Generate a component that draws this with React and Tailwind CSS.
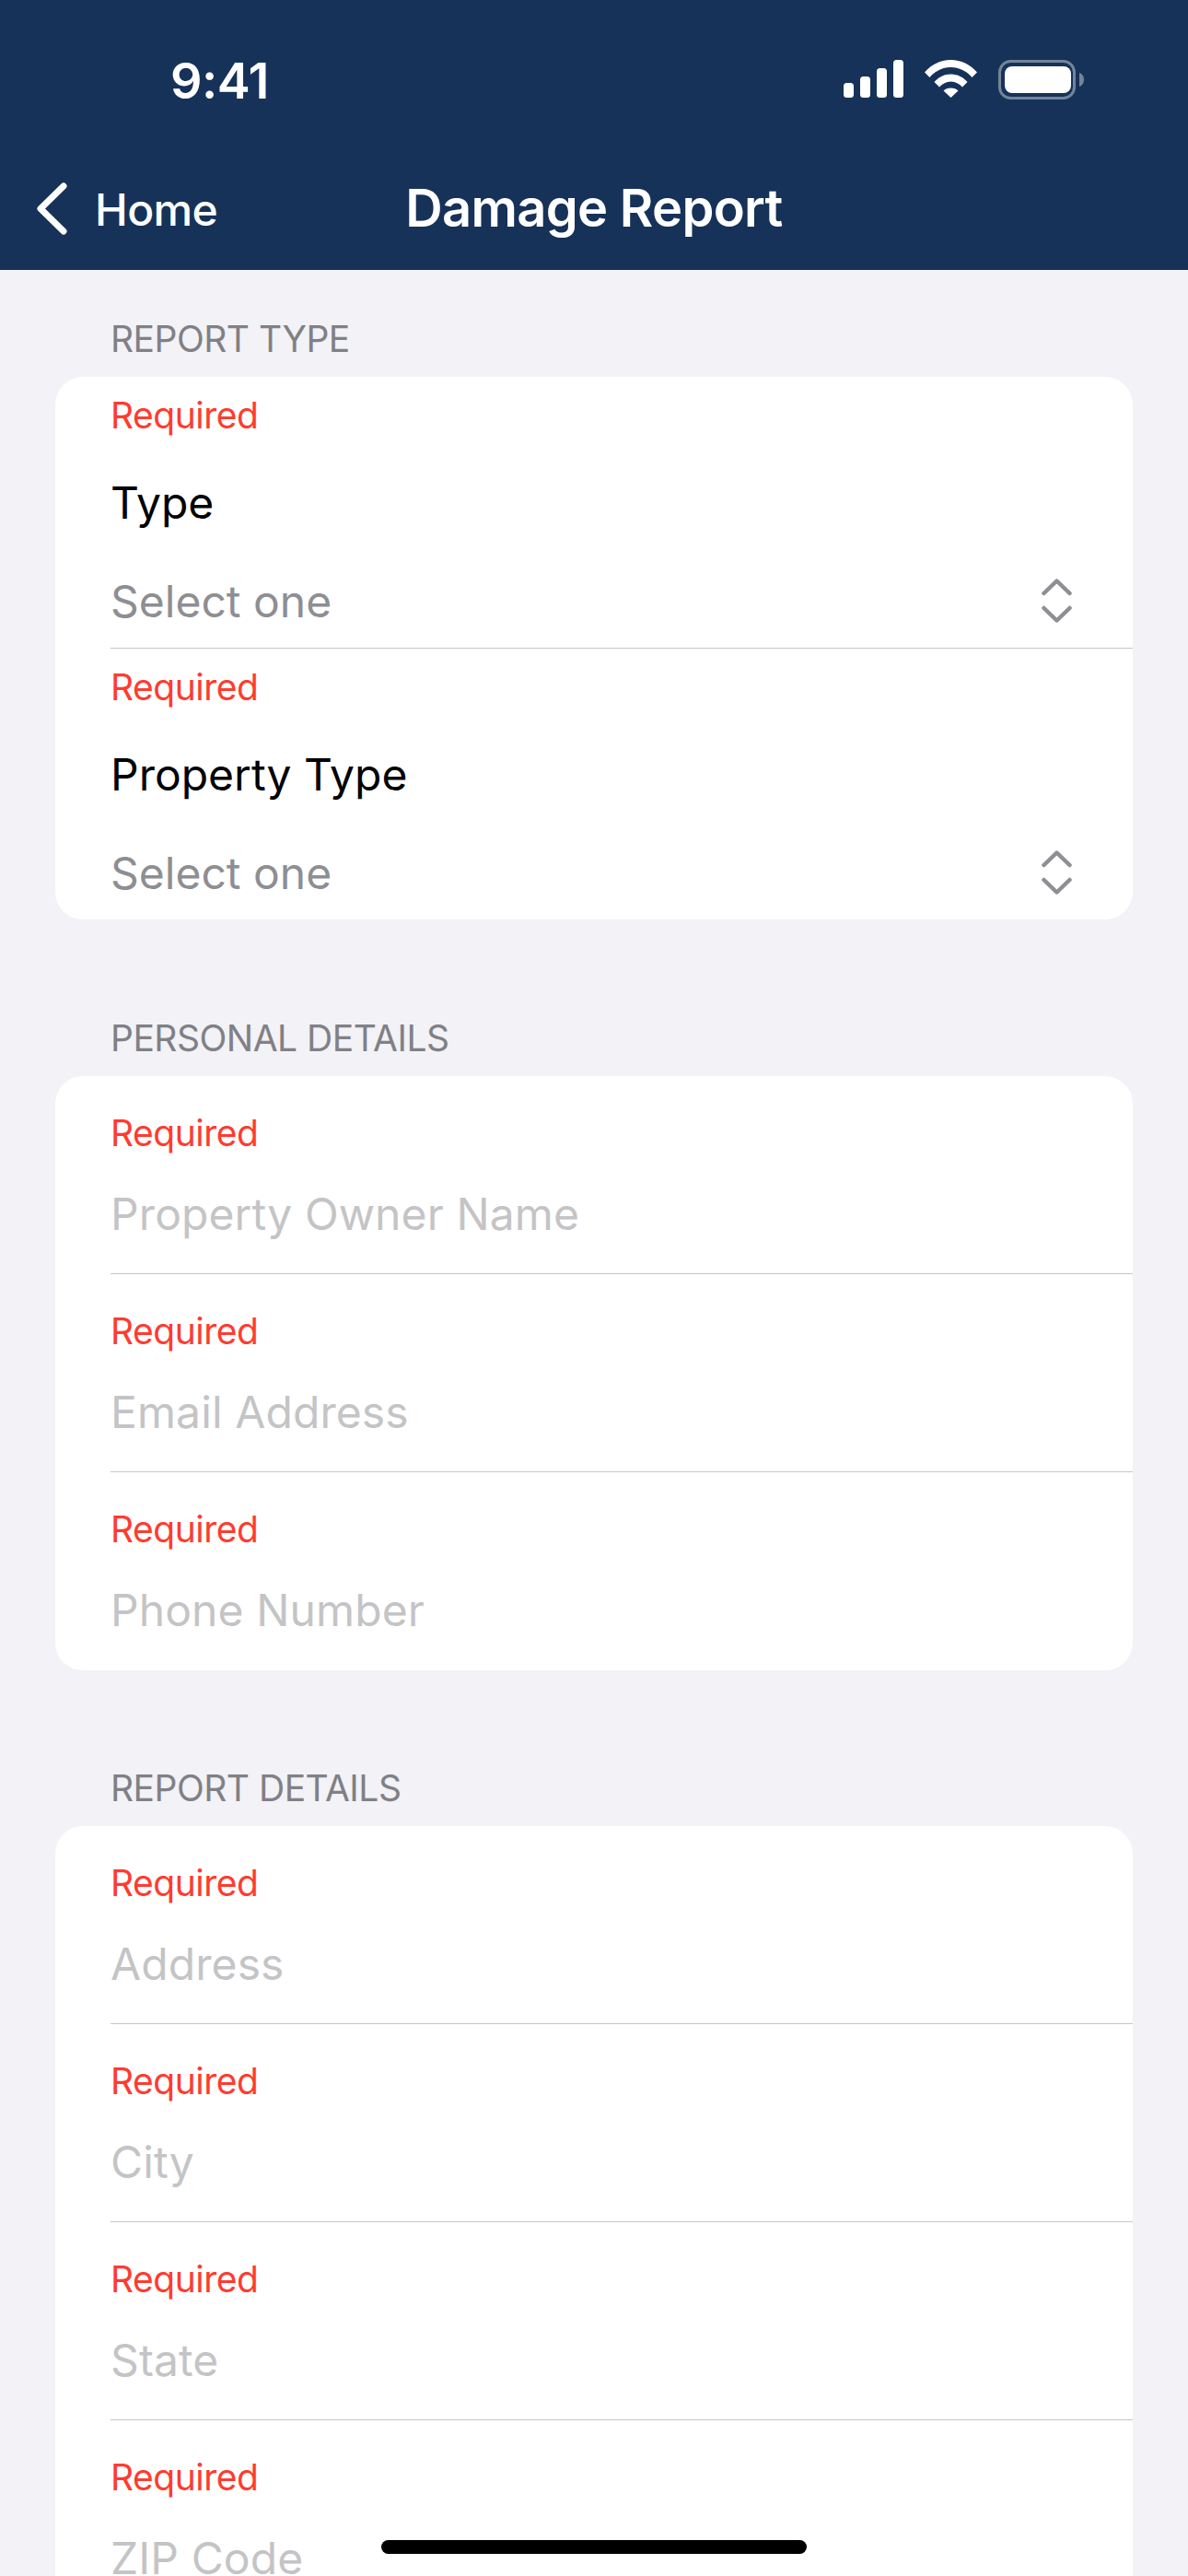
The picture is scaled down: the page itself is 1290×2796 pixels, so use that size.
import React from 'react';

const FONT = "font-['Inter','Liberation_Sans',sans-serif]";

const SignalIcon = () => (
  <svg width="65" height="41" viewBox="0 0 65 41" fill="white">
    <rect x="0" y="25" width="11" height="16" rx="3.5" />
    <rect x="18" y="18" width="11" height="23" rx="3.5" />
    <rect x="36" y="9" width="11" height="32" rx="3.5" />
    <rect x="54" y="0" width="11" height="41" rx="3.5" />
  </svg>
);

const WifiIcon = () => (
  <svg width="57" height="41" viewBox="0 0 57 41" fill="white">
    <path d="M0 13.5C7.5 5 17.5 0 28.5 0S49.5 5 57 13.5L51.5 19C45.5 12 37.5 8 28.5 8S11.5 12 5.500 19Z" />
    <path d="M10.500 24C15 19 21 15.500 28.500 15.500S42 19 46.500 24L41 29.500C37.500 26 33.500 23.500 28.500 23.500S19.500 26 16 29.500Z" />
    <path d="M20.500 33.500C22.500 31.500 25 30.500 28.500 30.500S34.500 31.500 36.500 33.500L28.500 41Z" />
  </svg>
);

const BatteryIcon = () => (
  <svg width="93" height="43" viewBox="0 0 93 43" fill="none">
    <rect x="1.500" y="1.500" width="81" height="40" rx="12" stroke="white" strokeOpacity="0.4" strokeWidth="3" />
    <rect x="7" y="7" width="72" height="29" rx="8" fill="white" />
    <path d="M88 14C91 15 93 18 93 21.500S91 28 88 29Z" fill="white" fillOpacity="0.4" />
  </svg>
);

const BackChevron = () => (
  <svg width="33" height="57" viewBox="0 0 33 57" fill="none" stroke="white" strokeWidth="7" strokeLinecap="round" strokeLinejoin="round" className="mt-[2px]">
    <path d="M29 4 L4 28.500 L29 53" />
  </svg>
);

const UpDownIcon = () => (
  <svg width="33" height="48" viewBox="0 0 33 48" fill="none" stroke="#8e8e93" strokeWidth="4.500" strokeLinecap="round" strokeLinejoin="round" className="mb-[2px]">
    <path d="M2.500 16 L16.500 2.500 L30.500 16" />
    <path d="M2.500 32 L16.500 45.500 L30.500 32" />
  </svg>
);

const Required = () => (
  <div className="h-[48px] leading-[48px] text-[39px] tracking-[-0.5px] text-[#ff3b30]">Required</div>
);

const Divider = () => <div className="ml-[60px] h-px bg-[#c6c6c8]" />;

const SectionLabel = ({ children }) => (
  <div className="ml-[120px] mb-[18px] h-[48px] leading-[50px] text-[39px] tracking-[-0.5px] text-[#808085] uppercase">
    {children}
  </div>
);

const PickerRow = ({ label }) => (
  <div className="pl-[60px] pr-[66px] pt-[18px] pb-[20px]">
    <Required />
    <div className="mt-[41px] h-[60px] leading-[60px] text-[48px] text-black">{label}</div>
    <div className="mt-[47px] flex h-[60px] items-center justify-between">
      <span className="text-[48px] leading-[60px] text-[#8e8e93]">Select one</span>
      <UpDownIcon />
    </div>
  </div>
);

const FieldRow = ({ placeholder }) => (
  <div className="pl-[60px] pt-[38px] pb-[34px]">
    <Required />
    <div className="mt-[34px] h-[60px] leading-[60px] text-[48px] tracking-[0.1px] text-[#c4c4c6]">{placeholder}</div>
  </div>
);

const Card = ({ children }) => (
  <div className="mx-[60px] rounded-[30px] bg-white overflow-hidden">{children}</div>
);

export default function App() {
  return (
    <div className={`relative h-[2796px] w-[1290px] overflow-hidden bg-[#f2f2f7] ${FONT}`}>
      {/* nav bar with status bar */}
      <header className="h-[293px] bg-[#163259] text-white">
        <div className="flex h-[176px] items-start justify-between pl-[185px] pr-[113px] pt-[55px]">
          <span className="text-[54px] leading-[66px] font-semibold tracking-[-0.5px]">9:41</span>
          <div className="flex items-start gap-[23px] pt-[10px]">
            <SignalIcon />
            <WifiIcon />
            <BatteryIcon />
          </div>
        </div>
        <div className="relative flex h-[117px] items-center pb-[18px] pl-[40px]">
          <BackChevron />
          <span className="ml-[30px] mt-[4px] text-[48px] leading-[60px] font-medium tracking-[-0.6px]">Home</span>
          <span className="absolute left-0 right-0 text-center text-[56px] leading-[60px] font-semibold tracking-[-0.7px]">
            Damage Report
          </span>
        </div>
      </header>

      <main className="pt-[50px]">
        <SectionLabel>Report Type</SectionLabel>
        <Card>
          <PickerRow label="Type" />
          <Divider />
          <PickerRow label="Property Type" />
        </Card>

        <div className="mt-[104px]">
          <SectionLabel>Personal Details</SectionLabel>
          <Card>
            <FieldRow placeholder="Property Owner Name" />
            <Divider />
            <FieldRow placeholder="Email Address" />
            <Divider />
            <div className="pb-px">
              <FieldRow placeholder="Phone Number" />
            </div>
          </Card>
        </div>

        <div className="mt-[103px]">
          <SectionLabel>Report Details</SectionLabel>
          <Card>
            <FieldRow placeholder="Address" />
            <Divider />
            <FieldRow placeholder="City" />
            <Divider />
            <FieldRow placeholder="State" />
            <Divider />
            <FieldRow placeholder="ZIP Code" />
          </Card>
        </div>
      </main>

      {/* home indicator */}
      <div className="absolute left-[414px] top-[2757px] h-[15px] w-[462px] rounded-full bg-black" />
    </div>
  );
}
